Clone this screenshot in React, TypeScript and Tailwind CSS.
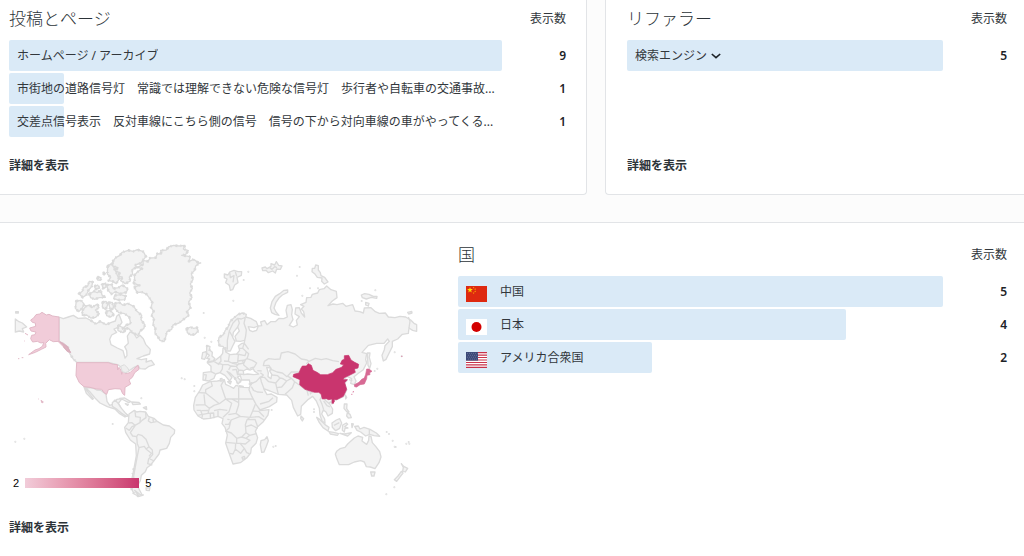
import type { ReactNode } from "react";

type Row = { label: string; value: number; flag?: ReactNode; expandable?: boolean };

const posts: Row[] = [
  { label: "ホームページ / アーカイブ", value: 9 },
  { label: "市街地の道路信号灯　常識では理解できない危険な信号灯　歩行者や自転車の交通事故...", value: 1 },
  { label: "交差点信号表示　反対車線にこちら側の信号　信号の下から対向車線の車がやってくる...", value: 1 },
];

const referrers: Row[] = [{ label: "検索エンジン", value: 5, expandable: true }];

const STAR = "M0-3 .7-1 2.9-.9 1.1.4 1.8 2.4 0 1.2-1.8 2.4-1.1.4-2.9-.9-.7-1Z";

function ChinaFlag() {
  return (
    <svg viewBox="0 0 21 16" className="h-4 w-[21px]" aria-hidden="true">
      <path fill="#de2910" d="M0 0h21v16H0z" />
      <path fill="#ffde00" transform="translate(4 4)" d={STAR} />
      {[[7.6, 1.7], [9.2, 3.2], [9.2, 5.4], [7.6, 7]].map(([x, y]) => (
        <path key={`${x}-${y}`} fill="#ffb000" transform={`translate(${x} ${y}) scale(.33)`} d={STAR} />
      ))}
    </svg>
  );
}

function JapanFlag() {
  return (
    <svg viewBox="0 0 21 16" className="h-4 w-[21px]" aria-hidden="true">
      <path fill="#fff" d="M0 0h21v16H0z" />
      <circle cx="10.5" cy="8" r="5" fill="#d30000" />
    </svg>
  );
}

function UsaFlag() {
  return (
    <svg viewBox="0 0 21 16" className="h-4 w-[21px]" aria-hidden="true">
      <path fill="#fff" d="M0 0h21v16H0z" />
      <path stroke="#c8324b" strokeWidth="1.23" d="M0 .6h21M0 3.1h21M0 5.5h21M0 8h21M0 10.5h21M0 12.9h21M0 15.4h21" />
      <path fill="#3c4a78" d="M0 0h12v8.6H0z" />
      <path stroke="#8e98b8" strokeWidth=".7" strokeDasharray=".7 1.3" d="M1 1.4h10.500M2 3.300h9.500M1 5.200h10.500M2 7.100h9.500" />
    </svg>
  );
}

const countries: Row[] = [
  { label: "中国", value: 5, flag: <ChinaFlag /> },
  { label: "日本", value: 4, flag: <JapanFlag /> },
  { label: "アメリカ合衆国", value: 2, flag: <UsaFlag /> },
];

function Chevron() {
  return (
    <svg viewBox="0 0 10 6" className="h-1.5 w-2.5" fill="none" stroke="#1d2327" strokeWidth="1.6" aria-hidden="true">
      <path d="M.8 1 5 4.700 9.200 1" />
    </svg>
  );
}

function StatList({ title, rows }: { title: string; rows: Row[] }) {
  const max = Math.max(...rows.map((r) => r.value));
  return (
    <section>
      <header className="flex h-10 items-center justify-between pb-0.5">
        <h2 className="text-[17px] leading-6 font-light text-[#2c3338]">{title}</h2>
        <span>表示数</span>
      </header>
      <ul className="flex flex-col gap-0.5">
        {rows.map((row) => (
          <li key={row.label} className="flex h-[31px] items-center">
            <div className="relative flex h-full min-w-0 flex-1 items-center pl-2">
              <div
                className="absolute inset-y-0 left-0 rounded-xs bg-[#daeaf7]"
                style={{ width: `${(row.value / max) * 100}%` }}
              />
              <div className="relative flex min-w-0 items-center">
                {row.flag && <span className="mt-1 mr-[13px] shrink-0">{row.flag}</span>}
                {row.expandable ? (
                  <button type="button" aria-expanded="false" className="flex items-center gap-1">
                    {row.label}
                    <Chevron />
                  </button>
                ) : row.flag ? (
                  <span>{row.label}</span>
                ) : (
                  <a href="#post" className="truncate">{row.label}</a>
                )}
              </div>
            </div>
            <span className="w-16 text-right font-semibold text-[#1d2327]">{row.value}</span>
          </li>
        ))}
      </ul>
    </section>
  );
}

function DetailsLink({ href }: { href: string }) {
  return (
    <a href={href} className="self-start leading-5 font-bold text-[#2c3338]">
      詳細を表示
    </a>
  );
}

const northAmerica = [
  "M177 246 190 251 205 246 220 241 234 250 258 249 272 256 288 267 300 259 318 269 334 262 346 258 350 244 357 238 366 262 356 276 342 282 350 292 335 300 329 313 333 329 352 339 369 347 375 369 381 362 380 347 374 335 385 325 382 303 390 291 402 296 410 309 420 301 430 311 437 328 451 343 449 357 430 363 411 371 424 374 440 371 438 381 454 376 463 389 447 394 436 402 420 401 414 391 402 397 386 408 370 402 355 390 325 382H230L219 371 209 355 203 335 190 325 177 319Z",
  "M255 456 278 459 290 465 302 466 318 478 321 499 329 511 345 506 350 493 366 491 355 505 362 516 365 534 383 540 375 546 359 536 345 522 322 515 300 504 285 489 270 471ZM252 456 263 470 280 491 277 493 259 475Z",
  "M359 490 374 489 392 500 386 503 371 495ZM395 501 416 502 421 507 399 509ZM376 506 385 508 383 511ZM430 518 439 515 440 524Z",
  "M46 252 57 260 67 264 80 276 67 281 71 291 58 288 46 291ZM47 230H55V234H47Z",
];

const arctic = [
  "M338 80 347 68 360 61 366 52 385 46 400 49 412 44 430 50 438 65 430 74 424 84 405 90 410 97 396 104 398 118 388 126 391 138 376 146 362 137 367 126 352 124 360 113 344 108 354 98 337 93Z",
  "M323 94 333 86 342 98 350 116 357 132 349 146 338 139 326 137 332 127 322 117Z",
  "M320 150 335 148 340 161 355 158 367 150 384 162 378 172 361 176 346 171 334 177 325 167Z",
  "M344 181 362 179 377 183 375 194 355 195 341 191Z",
  "M237 176 248 168 250 157 263 153 268 139 278 141 275 155 266 165 259 180 248 187Z",
  "M268 177 282 169 292 173 302 165 306 180 316 187 298 188 284 193 272 188Z",
  "M292 126 303 128 302 136 293 135ZM283 154 293 150 299 159 287 163ZM306 149 317 144 318 157 309 160ZM309 112 316 116 312 120Z",
  "M229 198 243 196 253 208 246 220 236 230 226 220Z",
  "M247 226 259 213 270 210 275 218 292 207 297 218 286 225 298 236 287 247 272 249 260 240 247 241Z",
  "M308 202 318 199 323 209 317 224 307 216ZM326 203 337 202 341 218 331 226ZM318 230 330 226 342 238 332 246 320 242Z",
  "M344 205 359 203 369 211 383 205 401 214 411 229 425 241 423 254 435 270 431 281 421 287 414 302 397 292 385 280 369 281 379 270 392 266 388 247 374 236 356 233 345 220Z",
  "M353 271 365 276 377 285 369 293 354 287Z",
  "M402 156 418 151 399 144 404 135 403 121 412 111 426 101 412 97 430 88 428 76 444 79 450 69 467 68 472 56 484 57 482 46 499 45 505 36 521 31 537 33 555 31 550 42 565 47 557 58 545 61 571 65 567 79 581 73 598 85 587 93 584 106 574 116 579 133 571 147 577 160 569 174 576 187 566 201 572 218 561 230 567 241 552 252 537 264 519 270 515 283 501 290 497 306 492 320 480 316 473 304 465 295 466 280 459 268 462 251 454 241 461 229 453 217 457 203 449 190 440 178 425 171 412 173Z",
  "M560 281 572 276 581 280 591 278 595 288 585 298 572 300 562 293Z",
];

const southAmerica = [
  "M387 132 403 121 410 126 420 124 437 126 445 139 462 145 473 155 490 165 508 168 524 180 523 190 512 202 508 220 500 235 480 240 477 252 462 272 452 285 441 293 436 305 424 316 421 332 412 348 425 372 417 379 402 372 393 352 396 325 402 295 409 257 407 222 391 210 377 187 374 172 385 158Z",
  "M438 354 450 353 448 362 439 361ZM404 361 419 373 430 375 417 379Z",
];
const southAmericaBorders =
  "M405 123 407 140 421 142 420 158 405 166 396 158 386 159M437 127 438 143 426 151 420 158M448 142 445 153 453 158 470 155M459 145 460 157M377 174 388 181 396 170 406 166M406 166 391 188 398 198 410 200 414 193M410 200 412 221 417 233 433 229 438 237 447 230 438 208 425 196 414 193M417 233 412 258 406 290 401 318 403 350M447 230 457 240 458 254 446 267 443 281 457 285M438 237 454 250 447 259M450 267 463 273";

const eurasia = [
  "M78 348 69 334 59 333 55 320 57 307 70 299 76 286 84 276 91 259 104 247 115 238 127 234 139 238 137 246 152 250 169 260 174 273 162 278 145 275 149 286 158 290 170 286 175 273 185 272 182 261 194 257 201 269 212 260 226 260 237 250 251 251 262 246 258 226 262 211 273 209 277 224 275 239 279 254 268 271 280 276 292 270 289 256 298 245 285 237 287 219 298 218 304 234 314 246 311 230 304 222 312 214 302 209 318 202 320 188 333 187 337 178 353 174 358 164 372 161 380 153 393 164 409 169 411 188 397 198 384 212 399 207 411 209 428 205 438 214 458 209 465 228 479 230 490 234 493 219 513 218 526 230 538 235 556 234 565 246 585 248 600 244 617 246 632 255 642 265 650 269V289L638 286 627 279 625 295 607 298 593 312 577 319 577 335 569 351 558 373 550 378 546 361 553 344 555 332 568 319 563 312 552 325 530 325 505 331 486 352 500 356 497 373 500 384 490 404 475 415 462 425 468 438 463 449 452 445 455 431 442 424 432 430 442 435 434 444 440 465 430 485 410 494 396 498 387 504 398 522 397 535 384 543 378 531 370 525 365 537 374 552 375 565 366 558 360 540 358 520 349 498 338 484 325 493 304 514 302 538 293 543 280 517 275 496 260 480 235 478 210 468 191 461 201 479 214 477 231 487 230 501 208 515 180 525 168 508 154 481 147 464 151 449 148 435 125 435 121 422 112 426 123 438 114 447 104 428 90 414 81 409 96 427 89 438 75 421 60 413 47 417 42 430 26 438 9 435 10 413 33 410 33 394 22 383 39 380 47 375 62 363 68 355 69 340 78 338 77 351 90 359 110 357 119 346 115 333 124 326 133 324 134 316 121 319 109 318 105 304 118 288 113 276 100 292 98 307 105 319 98 333 91 348Z",
  "M211 219 216 200 226 184 239 176 252 166 263 165 263 172 247 180 237 189 228 202 222 219 228 231 237 241 225 238 215 233Z",
  "M73 117 84 120 89 111 102 106 114 110 125 110 124 121 111 127 114 143 104 150 98 164 91 166 88 151 77 143 81 132 73 128Z",
  "M186 99 196 96 201 101 213 94 213 86 224 90 229 80 236 91 246 93 241 103 230 102 226 114 218 108 205 113 198 106 188 107Z",
  "M337 100 344 100 347 90 355 92 355 105 361 113 363 122 374 127 384 141 373 147 365 139 366 129 352 127 344 116 336 110Z",
  "M484 180 494 176 507 178 520 184 531 184 530 190 514 187 499 192 487 188ZM497 202 507 205 505 213 497 210ZM623 232 635 229 636 234 626 237Z",
  "M502 354 510 354 508 368 513 386 509 400 504 391Z",
  "M20 331 30 335 28 344 37 352 36 363 45 371 39 378 22 381 29 372 20 370 28 361 20 354ZM8 353 18 350 20 360 14 373 5 371Z",
  "M303 543 311 551 307 558 302 550ZM61 431 66 430 66 438 61 438ZM83 440 94 439 91 447ZM119 452 130 454 120 456ZM147 447 156 443 153 450Z",
];
const eurasiaBorders =
  "M98 306 88 288 99 264 113 250 124 252 136 247M82 344 82 316 88 288M113 276 118 264 113 250M136 247 132 265 139 285 137 303 134 316M132 326 128 340 117 340M128 340 139 350 135 362 110 357M139 350 146 356 141 371 157 376 170 384 163 396 149 400M115 360 113 382 96 384 85 379 88 360M62 363 63 379 57 385 68 389 67 402 60 413M43 380 58 389M68 389 84 389 92 393 86 405M85 379 72 378M96 384 112 388 132 384 136 375 113 378M92 393 109 394 116 405 132 407M109 394 118 385M97 405 109 403 113 421M12 419 19 420 16 436M33 410 45 416M132 324 146 343M141 371 128 378 132 391 146 402M116 405 113 417 130 418M193 379 206 371 225 373 240 372 244 354 264 350 285 357 304 372 321 375 327 379M193 379 190 392 207 391 215 404 205 408M327 379 346 370 364 374 379 371 398 377 417 380M215 404 231 411 247 414 261 425 274 411 300 411M327 379 319 387M205 408 217 420 233 422 240 429 227 444 206 440 193 427 181 426M150 448 169 439 181 426 184 440 192 461M158 465 172 471 189 472M227 444 230 458 235 478M230 458 245 456 260 438 274 430 284 440M260 438 247 430 240 429M284 440 277 458 263 471 255 478M274 430 264 424M284 440 299 451 321 466 336 473 347 461M321 466 325 482M180 507 207 499 219 488M154 455 161 466M330 478 335 471M366 484 360 494 366 508 371 524M366 484 377 497 388 506M371 498 381 512 390 516M447 434 457 437M625 246 630 258 627 279M181 413 190 420 183 427M172 407 185 408";

const china =
  "M279 425 281 418 297 414 302 401 307 393 319 393 325 386 334 391 339 406 351 412 362 419 382 419 398 413 408 403 425 397 431 389 421 387 426 376 433 373 433 362 446 361 453 375 464 382 476 388 474 399 463 402 466 412 450 420 442 424 432 428 430 434 442 434 434 443 440 463 430 484 410 494 396 492 386 494 379 491 367 492 363 477 356 472 343 472 331 468 315 463 299 449 300 434Z";
const japan =
  "M500 402 507 402 516 409 509 413 510 419 501 421 500 431 493 447 480 449 470 456 464 455 463 449 477 442 485 433 493 429 497 418Z";

const africa =
  "M38 60 60 50 82 48 103 44 107 58 118 63 131 70 138 61 160 67 181 68 187 83 196 108 207 126 210 137 237 134 234 150 220 170 203 185 196 199 203 218 198 235 184 249 182 264 170 279 151 293 129 297 119 269 107 235 112 210 105 187 96 176 99 161 84 154 61 160 40 162 24 153 12 135 11 121 16 97 30 76Z";
const africaBorders =
  "M26 83 47 84 47 74 67 63 63 50M47 84 88 116 107 102 98 76 93 61 103 44M107 102 146 102 146 67M107 102 125 115 117 140 99 157M146 102V120L138 145 115 149M146 102H191M125 102 145 112M138 145 151 154 180 157 188 138 196 118M180 157 206 155 222 165M17 120 45 119 42 88M45 119 58 130 54 145 38 148 35 161M58 130 72 121 88 116M54 145 71 144 72 160M72 137 89 133 112 136M84 137 84 154M35 137 54 136M20 136 32 136 36 148 24 151M151 154 123 165 117 190 107 198 124 204 140 220 155 216 168 203 166 179 171 164 180 157M107 232 140 235 140 220M137 235 136 252 129 267 118 265M136 252 152 265 163 250 150 235 140 235M155 216 168 220 179 211 199 206M150 235 166 237 180 226 168 220M163 250 170 263 178 266M168 185 184 180 203 190M168 203 179 211M171 164 195 163 203 185M156 277 163 274 165 280 158 283ZM112 163 119 164M105 178 116 178 124 165M61 144 61 160M188 138 206 139 222 155";

const oceania = [
  "M211 239 213 227 224 224 231 215 235 227 229 244 222 261 215 262Z",
  "M440 259 450 251 465 247 473 237 482 229 493 219 504 213 518 217 516 228 530 238 536 226 537 213 543 214 547 233 557 244 569 260 573 276 567 293 555 311 541 306 529 305 523 291 512 287 493 291 476 299 448 299 440 280 436 267Z",
  "M542 321 555 321 552 333 545 333ZM634 296 641 304 653 310 646 321 638 318 640 307ZM634 319 639 324 629 337 620 349 613 344 624 333Z",
  "M380 157 390 164 404 178 417 187 414 198 399 188 387 171ZM417 200 431 202 446 206 442 211 421 207ZM426 174 439 165 449 161 455 174 449 190 437 197 427 187ZM458 180 469 174 473 178 464 185 474 189 465 190 463 201 457 196ZM450 205 464 207 484 203 473 213ZM485 176 490 177 486 188Z",
  "M494 184 505 183 510 192 522 187 540 193 559 204 569 214 552 212 539 208 527 213 512 201 501 196Z",
  "M463 117 471 117 470 131 477 141 470 140 462 130ZM472 143 480 148 484 158 475 159 470 153ZM466 90 470 97 467 102ZM421 111 430 109 426 117Z",
];

const islets: [number, number][] = [
  [312, 113], [611, 234], [614, 308], [634, 320], [545, 430], [554, 433], [583, 453], [583, 469], [46, 620], [73, 611],
  [338, 567], [424, 490], [601, 84], [731, 135], [745, 110], [700, 197], [891, 122], [899, 96], [907, 182],
  [930, 160], [954, 160], [1126, 166], [1085, 198], [1184, 352], [1205, 364], [820, 635], [827, 633],
  [815, 525], [942, 523], [942, 531], [1160, 591], [1167, 597], [1178, 617], [1184, 635], [1187, 636], [1219, 626],
  [1226, 621], [1228, 626], [1183, 757], [1159, 778], [1124, 408], [1132, 401],
];

// Wide dashes along a shoreline, drawn to suggest fjords and skerries.
const fjords = { fill: "none", strokeWidth: 8, strokeDasharray: "6 9 3 12", strokeLinejoin: "round" } as const;

function WorldMap() {
  return (
    <svg viewBox="27 3 1293 804" className="block w-full" role="img" aria-label="国別表示数の地図">
      <g fill="#f3f3f3" stroke="#dbdbdb" strokeWidth="4" strokeLinejoin="round">
        {northAmerica.map((d) => <path key={d} d={d} />)}
        {arctic.map((d) => <path key={d} d={d} />)}
        <path d={arctic.join("")} {...fjords} />
        <path d="M203 335 209 355 219 371 230 382M272 256 288 267 300 259 318 269 334 262" {...fjords} />
        <g transform="translate(0 405)">
          <path d="M345 90 355 101 362 112 377 130 385 138 379 139 365 130 352 119 337 109 337 98Z" />
          {southAmerica.map((d) => <path key={d} d={d} />)}
          <path d={southAmericaBorders} fill="none" />
          <path d="M402 295 396 325 393 352 402 372 417 379" {...fjords} />
        </g>
        <g transform="translate(570 390)">
          <path d={africa} />
          <path d={africaBorders} fill="none" />
          {oceania.map((d) => <path key={d} d={d} />)}
          <path d="M538 193V208M432 181 448 173" fill="none" />
        </g>
        <g transform="translate(600 0)">
          {eurasia.map((d) => <path key={d} d={d} />)}
          <path d={eurasiaBorders} fill="none" />
          <path d="M59 333 55 320 57 307 70 299 76 286 84 276 91 259 104 247 115 238 127 234 139 238M20 331 28 344 37 352M104 428 114 447 121 440" {...fjords} />
          <path fill="#fff" d="M130 408 140 402 151 405 160 401 163 408 176 417 161 419 143 417 131 419ZM200 397 212 399 209 408 215 418 213 431 204 425 205 414Z" />
          <path d="M89 112 91 128 102 122 99 142M106 110 110 124M209 98 216 103 224 95 231 98" fill="none" />
        </g>
        {islets.map(([x, y], i) => <circle key={i} cx={x} cy={y} r="1" />)}
      </g>
      <g fill="#f1ccd9" stroke="#e2b9c7" strokeWidth="3" strokeLinejoin="round">
        <path d="M177 246 158 243 147 238 139 240 126 232 119 237 108 239 101 249 92 255 97 262 106 264 107 274 89 279 93 288 108 291 105 299 95 301 92 311 98 321 112 319 123 324 131 322 128 333 117 341 105 345 86 359 106 352 124 343 138 336 137 325 148 314 160 320 177 319 190 325 203 335 211 352 203 350 190 335 177 322Z" />
        <path d="M230 383H325L340 388 352 389 353 405 357 397 363 405 365 418 369 406 370 402 380 408 376 416 390 413 402 401 414 391 417 403 404 413 397 427 387 435 392 447 375 457 374 481 368 476 362 462 345 461 325 464 320 478 313 474 305 463 290 462 270 457 252 455 238 443 228 422Z" />
        <path d="M123 496 130 501 126 504ZM114 492H116M72 318H74M75 295 84 300M65 368H70M54 371H58" />
      </g>
      <path d="M362 394 373 389 383 399 388 408 377 413 367 410Z" fill="#eee" stroke="#dcdcdc" strokeWidth="3" />
      <path d="M180 321 202 336 210 351 202 348 190 334" fill="#dfb3c1" stroke="#d8b0bd" strokeWidth="4" />
      <g transform="translate(600 0)" strokeWidth="2" strokeLinejoin="round">
        <path d={china} fill="#c9356e" stroke="#c9356e" />
        <path d="M395 492 403 492 404 499 400 507 395 505Z" fill="#c9356e" />
        <path d={japan} fill="#d76a94" stroke="#d76a94" />
        <path d="M458 471 462 470M454 478H457M604 364H607" stroke="#d76a94" strokeWidth="3" />
      </g>
    </svg>
  );
}

export default function App() {
  return (
    <main className="min-h-screen bg-[#fcfcfc] font-['Noto_Sans','Noto_Sans_CJK_JP',sans-serif] text-xs text-[#32373c]">
      <div className="grid grid-cols-[587fr_419fr] gap-[18px]">
        <div className="flex min-w-0 flex-col justify-between gap-[19px] rounded-br border-r border-b border-[#e2e4e7] bg-white pr-5 pb-[18px] pl-[9px]">
          <StatList title="投稿とページ" rows={posts} />
          <DetailsLink href="#posts" />
        </div>
        <div className="flex min-w-0 flex-col justify-between gap-[19px] rounded-bl border-b border-l border-[#e2e4e7] bg-white pr-[17px] pb-[18px] pl-[21px]">
          <StatList title="リファラー" rows={referrers} />
          <DetailsLink href="#referrers" />
        </div>
      </div>

      <div className="mt-[27px] flex flex-col gap-3.5 border-t border-[#e2e4e7] bg-white pt-[13px] pr-[17px] pb-5 pl-[9px]">
        <div className="grid grid-cols-[431fr_549fr] gap-[18px]">
          <div className="relative">
            <WorldMap />
            <div className="absolute bottom-[15px] left-1 flex h-3 items-center gap-1.5 font-['Liberation_Sans',sans-serif] text-[11px] text-black">
              <span>2</span>
              <span className="h-2.5 w-[114px] bg-linear-to-r from-[#f1ccd9] to-[#c9356e]" />
              <span>5</span>
            </div>
          </div>
          <StatList title="国" rows={countries} />
        </div>
        <DetailsLink href="#countries" />
      </div>
    </main>
  );
}
